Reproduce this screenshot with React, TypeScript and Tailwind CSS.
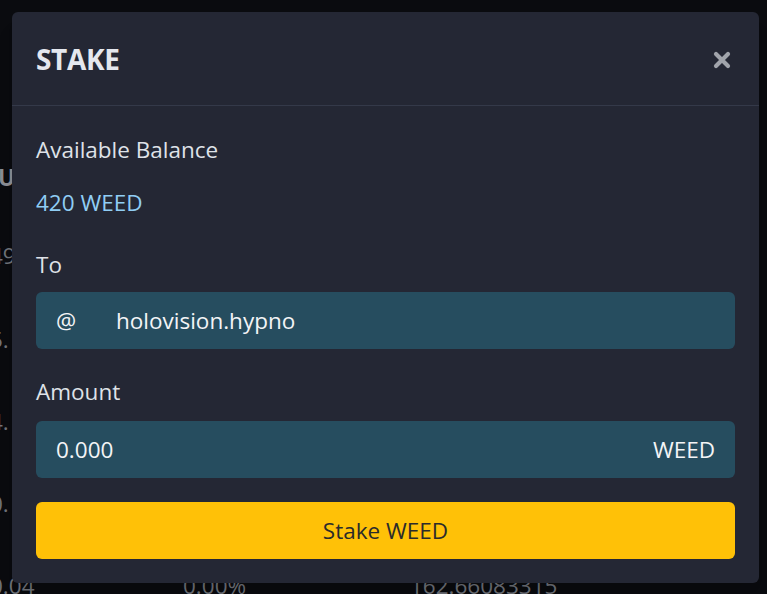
import React from 'react';

const rows = [
  { a: 'U', b: '', c: '', bold: true, h: 'h-[78px]' },
  { a: '49', b: '', c: '', h: 'h-[84px]' },
  { a: '5.', b: '', c: '', h: 'h-[82px]' },
  { a: '4.', b: '', c: '', h: 'h-[82px]' },
  { a: '0.', b: '', c: '', h: 'h-[82px]' },
  { a: '0.04', b: '0.00%', c: '162.66083315', h: 'h-[82px]' },
];

const CloseIcon = () => (
  <svg width="18" height="18" viewBox="0 0 18 18" fill="none">
    <path d="M3 3L15 15M15 3L3 15" stroke="#a1a4ab" strokeWidth="4.2" strokeLinecap="round" />
  </svg>
);

const StakeModal = () => {
  return (
    <div className="absolute left-[12px] top-[12px] w-[747px] h-[571px] rounded-md bg-[#242734] shadow-xl">
      <div className="h-[94px] flex items-center justify-between pl-6 pr-7 border-b border-[#343949]">
        <h2 className="text-[28px] font-bold text-[#e4e7ee] tracking-[-0.3px]">STAKE</h2>
        <button className="mt-[2px] text-[#a1a4ab]">
          <CloseIcon />
        </button>
      </div>

      <div className="px-6 pt-[29px]">
        <p className="text-[22.5px] leading-[30px] text-[#dfe2e8]">Available Balance</p>
        <p className="mt-[23px] text-[22.5px] leading-[30px] text-[#90cdf4]">420 WEED</p>

        <p className="mt-[32px] text-[22.5px] leading-[30px] text-[#dfe2e8]">To</p>
        <div className="mt-[12px] h-[57px] rounded-md bg-[#264d5f] flex items-center px-5 text-[22.5px] text-[#f3f4f6]">
          <span className="w-[60px]">@</span>
          <span>holovision.hypno</span>
        </div>

        <p className="mt-[28px] text-[22.5px] leading-[30px] text-[#dfe2e8]">Amount</p>
        <div className="mt-[14px] h-[57px] rounded-md bg-[#264d5f] flex items-center justify-between px-5 text-[22.5px] text-[#f3f4f6]">
          <span>0.000</span>
          <span>WEED</span>
        </div>

        <button className="mt-[24px] w-full h-[57px] rounded-md bg-[#ffc107] text-[22.5px] text-[#2b2b2b]">
          Stake WEED
        </button>
      </div>
    </div>
  );
};

export default function App() {
  return (
    <div
      className="relative w-[767px] h-[594px] overflow-hidden bg-[#0a0b0f]"
      style={{ fontFamily: '"Open Sans", "Noto Sans", sans-serif' }}
    >
      <div className="pt-[163px] flex flex-col">
        {rows.map((r, i) => (
          <div key={i} className={`${r.h} flex text-[22.5px] text-[#6f7279] leading-[30px]`}>
            <span className={`w-[193px] -ml-[10px] ${r.bold ? 'font-bold text-[#8a8d94] ml-[-2px]' : ''}`}>{r.a}</span>
            <span className="w-[227px]">{r.b}</span>
            <span>{r.c}</span>
          </div>
        ))}
      </div>
      <StakeModal />
    </div>
  );
}
